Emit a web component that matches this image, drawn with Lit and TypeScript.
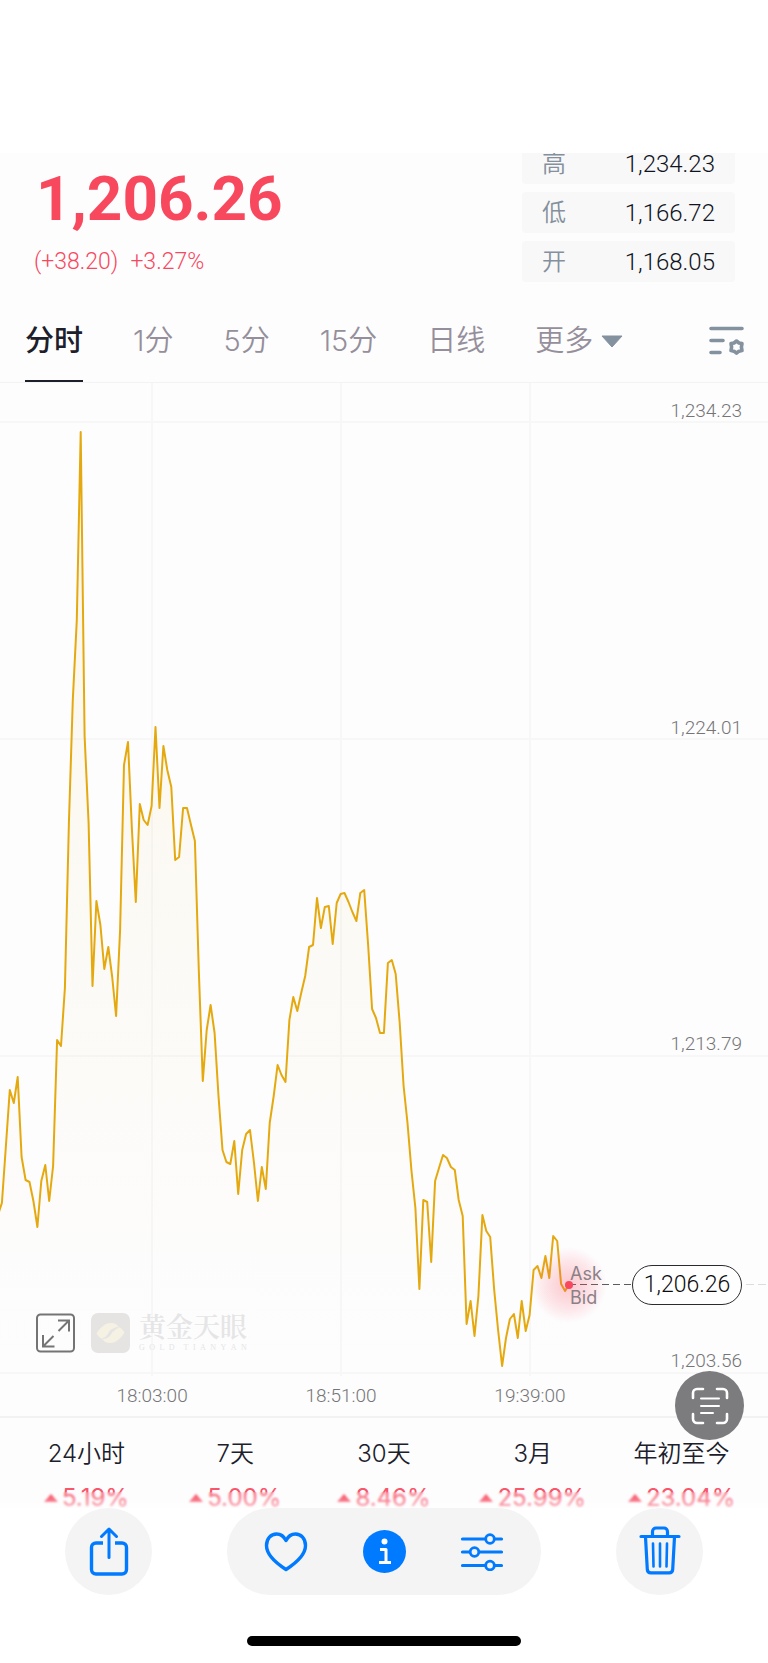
import { LitElement, html, css, svg } from "lit";
import { customElement } from "lit/decorators.js";

const PLOT_W = 768;
const PLOT_H = 993;
const FIRST_X = -2;
const LAST_X = 569;

// One sample per minute, measured down from the top edge of the plot.
const SAMPLES = [
  832, 820, 763, 707, 720, 694, 774, 797, 799, 818, 844, 798, 782, 818, 783, 657, 663, 605, 440, 317,
  237, 49, 353, 440, 603, 518, 542, 586, 564, 594, 633, 547, 382, 359, 446, 519, 421, 437, 442, 423,
  344, 425, 363, 387, 404, 477, 474, 425, 425, 442, 458, 587, 698, 647, 622, 650, 713, 767, 779, 781,
  758, 811, 767, 751, 747, 780, 818, 784, 806, 740, 713, 682, 692, 699, 637, 614, 628, 610, 593, 564,
  562, 515, 545, 524, 523, 561, 520, 511, 510, 519, 529, 538, 510, 507, 563, 626, 635, 650, 650, 580,
  577, 591, 640, 703, 740, 788, 825, 906, 817, 819, 879, 798, 785, 772, 775, 784, 787, 817, 833, 941,
  918, 953, 913, 832, 848, 854, 907, 947, 983, 955, 936, 931, 955, 918, 948, 932, 887, 883, 895, 873,
  895, 853, 858, 901, 908, 901,
];

const LINE = SAMPLES.map((y, i) => {
  const x = FIRST_X + ((LAST_X - FIRST_X) * i) / (SAMPLES.length - 1);
  return `${x.toFixed(1)},${y}`;
}).join(" ");

@customElement("quote-header")
class QuoteHeader extends LitElement {
  static styles = css`
    :host {
      display: flex;
      justify-content: space-between;
      overflow: hidden;
      padding: 0 33px 0 34px;
      height: 153px;
      font-family: Roboto, "Noto Sans CJK SC", sans-serif;
    }
    .price {
      margin: 10px 0 0 2px;
      font-size: 62px;
      line-height: 72px;
      font-weight: 700;
      color: #f8485e;
    }
    .change {
      display: flex;
      gap: 12px;
      margin-top: 13px;
      font-size: 23px;
      line-height: 28px;
      font-weight: 300;
      color: #f8485e;
    }
    .range {
      display: flex;
      flex-direction: column;
      gap: 8px;
      margin: -10px 0 0;
      width: 213px;
    }
    .row {
      display: flex;
      justify-content: space-between;
      align-items: center;
      flex: none;
      box-sizing: border-box;
      height: 41px;
      padding: 0 20px;
      border-radius: 4px;
      background: #f8f8f9;
    }
    dt {
      font-size: 24px;
      font-weight: 350;
      line-height: 32px;
      color: #84909c;
    }
    dd {
      margin: 0;
      font-size: 24px;
      font-weight: 300;
      line-height: 32px;
      color: #10141e;
    }
  `;
  render() {
    const rows = [["高", "1,234.23"], ["低", "1,166.72"], ["开", "1,168.05"]];
    return html`
      <div>
        <div class="price">1,206.26</div>
        <div class="change"><span>(+38.20)</span><span>+3.27%</span></div>
      </div>
      <dl class="range">
        ${rows.map(([k, v]) => html`<div class="row"><dt>${k}</dt><dd>${v}</dd></div>`)}
      </dl>
    `;
  }
}

@customElement("period-tabs")
class PeriodTabs extends LitElement {
  static styles = css`
    :host {
      display: flex;
      justify-content: space-between;
      align-items: stretch;
      height: 76px;
      padding: 0 23px 0 25px;
      border-bottom: 1px solid #f3f3f5;
      font-family: Inter, "Noto Sans CJK SC", sans-serif;
    }
    .tabs {
      display: flex;
      gap: 50px;
    }
    button {
      display: flex;
      align-items: center;
      border: 0;
      border-bottom: 2px solid transparent;
      margin: 0;
      padding: 0 0 4px;
      background: none;
      font: inherit;
      font-size: 28px;
      font-weight: 350;
      line-height: 40px;
      color: #958f9b;
      white-space: nowrap;
    }
    .tabs button {
      font-size: 29px;
    }
    .tabs .active {
      font-weight: 500;
      color: #1b202b;
      border-color: #1b202b;
    }
    .caret {
      margin-left: 8px;
    }
  `;
  render() {
    return html`
      <nav class="tabs" aria-label="周期">
        ${["分时", "1分", "5分", "15分", "日线"].map(
          (t, i) => html`<button class=${i === 0 ? "active" : ""}>${t}</button>`
        )}
        <button aria-haspopup="menu">
          更多
          <svg class="caret" width="22" height="13" viewBox="0 0 22 13" aria-hidden="true">
            <path d="M1 1h20L11 12z" fill="#84919e" stroke="#84919e" stroke-linejoin="round" />
          </svg>
        </button>
      </nav>
      <button aria-label="图表设置">
        <svg width="36" height="30" viewBox="0 0 36 30" fill="none" stroke="#84919e" stroke-linecap="round">
          <path d="M2 2.500h31M2 14.500h12M2 26.500h9" stroke-width="3.600" />
          <path d="M27.500 15 30 17 33 17.600 32.400 21 33 24.600 30 25.200 27.500 27.200 25 25.200 22 24.600 22.600 21 22 17.600 25 17z" stroke-width="3.600" stroke-linejoin="round" />
        </svg>
      </button>
    `;
  }
}

@customElement("price-chart")
class PriceChart extends LitElement {
  static styles = css`
    :host {
      display: block;
      border-bottom: 2px solid #f2f2f3;
      font-family: Roboto, "Noto Sans CJK SC", sans-serif;
      color: #757577;
    }
    .plot {
      display: grid;
      position: relative;
      height: 993px;
    }
    .plot > * {
      grid-area: 1 / 1;
    }
    .series {
      width: 100%;
      height: 100%;
    }
    .series * {
      vector-effect: non-scaling-stroke;
    }
    .levels {
      display: flex;
      flex-direction: column;
      justify-content: space-between;
      align-items: flex-end;
      padding: 16px 26px 3px 0;
      font-size: 19px;
      font-weight: 300;
      line-height: 24px;
    }
    .brand {
      display: flex;
      align-self: end;
      align-items: center;
      gap: 16px;
      padding: 0 36px 23px;
    }
    .expand {
      display: block;
      border: 0;
      padding: 0;
      height: 40px;
      background: none;
    }
    .mark {
      display: flex;
      align-items: center;
      gap: 9px;
      color: #e5e5e6;
      font-family: "Liberation Serif", "Noto Serif CJK SC", "Noto Sans CJK SC", serif;
    }
    .cn {
      font-size: 27px;
      line-height: 30px;
      font-weight: 600;
    }
    .en {
      display: flex;
      justify-content: space-between;
      font-size: 8px;
      line-height: 10px;
    }
    .en span {
      display: block;
    }
    .last {
      position: absolute;
      left: 74.1%;
      right: 0;
      top: 90.8%;
      display: flex;
      align-items: center;
      height: 40px;
      margin-top: -20px;
    }
    .glow {
      position: absolute;
      left: -38px;
      top: -18px;
      width: 76px;
      height: 76px;
      border-radius: 50%;
      background: radial-gradient(closest-side, #f8485e47 0%, #f8485e38 30%, #f8485e1f 65%, #f8485e00 100%);
    }
    .dot {
      position: absolute;
      left: -4px;
      top: 16px;
      width: 8px;
      height: 8px;
      border-radius: 50%;
      background: #f8485e;
    }
    .sides {
      position: absolute;
      left: 1px;
      top: -3px;
      display: grid;
      font: 18px / 24px Inter, sans-serif;
      color: #8b8086;
    }
    .dash {
      flex: 1;
      height: 1px;
      background: repeating-linear-gradient(90deg, #5c5c5e 0 7px, transparent 7px 11px);
    }
    .tail {
      flex: none;
      width: 22px;
      margin-left: 4px;
      height: 1px;
      background: repeating-linear-gradient(90deg, #dcdcdd 0 8px, transparent 8px 12px);
    }
    .pill {
      box-sizing: border-box;
      width: 110px;
      height: 40px;
      border: 1px solid #2c2c2e;
      border-radius: 20px;
      background: #fff;
      text-align: center;
      font-size: 23px;
      font-weight: 300;
      line-height: 38px;
      color: #0c0c0e;
    }
    .times {
      display: flex;
      padding-left: 7.5%;
      font-size: 19px;
      font-weight: 300;
      line-height: 40px;
    }
    .times span {
      width: 26.6%;
      text-align: center;
    }
  `;
  render() {
    return html`
      <div class="plot">
        <svg class="series" viewBox="0 0 ${PLOT_W} ${PLOT_H}" preserveAspectRatio="none" role="img" aria-label="分时走势">
          <defs>
            <linearGradient id="fill" x1="0" y1="0" x2="0" y2="1">
              <stop offset="0" stop-color="#e5ab16" stop-opacity="0.080" />
              <stop offset="1" stop-color="#e5ab16" stop-opacity="0" />
            </linearGradient>
          </defs>
          ${[39, 356, 673, 990].map((y) => svg`<path d="M0 ${y}H768" stroke="#f7f7f8" stroke-width="2" />`)}
          ${[152, 341, 530].map((x) => svg`<path d="M${x} 0V993" stroke="#f7f7f8" stroke-width="2" />`)}
          <polygon points="-2,990 ${LINE} 569,990" fill="url(#fill)" />
          <polyline points=${LINE} fill="none" stroke="#e5a910" stroke-width="2" stroke-linejoin="round" />
        </svg>
        <div class="levels">
          <span>1,234.23</span><span>1,224.01</span><span>1,213.79</span><span>1,203.56</span>
        </div>
        <div class="brand">
          <button class="expand" aria-label="全屏">
            <svg width="39" height="40" viewBox="0 0 39 40" fill="none" stroke="#747475" stroke-width="2">
              <rect x="1" y="1.500" width="37" height="37" rx="3.500" />
              <path d="M22 7.500h11v11M32.500 8 22.500 18M7 22v11.500h11.500M7.500 33 17.500 23" />
            </svg>
          </button>
          <div class="mark">
            <svg width="39" height="40" viewBox="0 0 39 40" aria-hidden="true">
              <rect width="39" height="40" rx="7" fill="#e6e4e3" />
              <path d="M5.500 20.500C9 15 14 10 20 10c3.500 0 6 1.500 7.500 4-4 0-6.500 1.500-8.500 4.500-1.800 2.700-2.500 5-4.500 6.500-2.500 1.800-6 .5-9-4.500z" fill="#f5f2e4" />
              <path d="M33.500 19.500C30 25 25 30 19 30c-3.500 0-6-1.500-7.500-4 4 0 6.500-1.500 8.500-4.500 1.800-2.700 2.500-5 4.500-6.500 2.500-1.800 6-.5 9 4.500z" fill="#f5f2e4" />
              <path d="M21.500 16.500c-2.500 1.500-4 4-4.500 7M27 14.300c-2.500.7-4 2.200-5 4.200M12 25.700c2.500-.7 4-2.200 5-4.200" stroke="#e6e4e3" stroke-width="1.400" fill="none" />
            </svg>
            <div>
              <div class="cn">黄金天眼</div>
              <div class="en">${[..."GOLD TIANYAN"].map((c) => html`<span>${c}</span>`)}</div>
            </div>
          </div>
        </div>
        <div class="last">
          <span class="glow"></span>
          <span class="sides"><span>Ask</span><span>Bid</span></span>
          <span class="dash"></span>
          <span class="dot"></span>
          <span class="pill">1,206.26</span>
          <span class="tail"></span>
        </div>
      </div>
      <div class="times"><span>18:03:00</span><span>18:51:00</span><span>19:39:00</span></div>
    `;
  }
}

@customElement("period-stats")
class PeriodStats extends LitElement {
  static styles = css`
    :host {
      display: grid;
      position: relative;
      grid-template-columns: repeat(5, 1fr);
      padding: 16px 12px 0;
      font-family: Inter, "Noto Sans CJK SC", sans-serif;
      text-align: center;
      white-space: nowrap;
    }
    .name {
      font-size: 24px;
      line-height: 40px;
      font-weight: 350;
      color: #1b202b;
    }
    .value {
      display: flex;
      justify-content: center;
      align-items: center;
      gap: 4px;
      margin-top: 14px;
      font-size: 24px;
      line-height: 20px;
      font-weight: 400;
      color: #f8566b;
    }
    .soft {
      position: absolute;
      left: 0;
      right: 0;
      bottom: 0;
      height: 16px;
      backdrop-filter: blur(1px);
      background: linear-gradient(#ffffff00, #ffffff80);
    }
  `;
  render() {
    const stats = [["24小时", "5.19%"], ["7天", "5.00%"], ["30天", "8.46%"], ["3月", "25.99%"], ["年初至今", "23.04%"]];
    return html`
      ${stats.map(
        ([n, v]) => html`<div>
          <div class="name">${n}</div>
          <div class="value">
            <svg width="14" height="8" viewBox="0 0 14 8" aria-hidden="true"><path d="M7 0 14 8H0z" fill="#f8485e" /></svg>
            <span>${v}</span>
          </div>
        </div>`
      )}
      <div class="soft"></div>
    `;
  }
}

@customElement("photo-toolbar")
class PhotoToolbar extends LitElement {
  static styles = css`
    :host {
      display: flex;
      justify-content: space-between;
      padding: 0 65px;
    }
    .group {
      display: flex;
      padding: 0 10px;
      border-radius: 43px;
      background: #f4f4f5;
    }
    button {
      display: grid;
      place-items: center;
      width: 98px;
      height: 87px;
      border: 0;
      padding: 0;
      background: none;
    }
    .round {
      width: 87px;
      border-radius: 50%;
      background: #f4f4f5;
    }
    svg {
      fill: none;
      stroke: #007aff;
      stroke-width: 3.4;
      stroke-linecap: round;
      stroke-linejoin: round;
    }
    .solid {
      fill: #007aff;
      stroke: none;
    }
    .white {
      stroke: #fff;
      stroke-linecap: butt;
    }
    .dot {
      fill: #fff;
      stroke: none;
    }
    .knob {
      fill: #f4f4f5;
      stroke-width: 2.8;
    }
    .thin {
      stroke-width: 2.6;
    }
  `;
  render() {
    return html`
      <button class="round" aria-label="分享">
        <svg width="40" height="50" viewBox="0 0 40 50">
          <path d="M14 16H7a4.500 4.500 0 0 0-4.500 4.500v22A4.500 4.500 0 0 0 7 47h26a4.500 4.500 0 0 0 4.500-4.500v-22A4.500 4.500 0 0 0 33 16h-7" stroke-linecap="butt" />
          <path d="M20 30.500V2.500M12.500 9.500 20 2l7.500 7.500" stroke-width="3" />
        </svg>
      </button>
      <div class="group">
        <button aria-label="收藏">
          <svg width="44" height="40" viewBox="0 0 44 40">
            <path d="M22 37.500C15 33 2.500 24.500 2.500 13.500 2.500 6.500 7 2 12.500 2 17 2 20 4.500 22 8.500 24 4.500 27 2 31.500 2 37 2 41.500 6.500 41.500 13.500 41.500 24.500 29 33 22 37.500Z" />
          </svg>
        </button>
        <button aria-label="信息">
          <svg width="43" height="43" viewBox="0 0 43 43">
            <circle class="solid" cx="21.500" cy="21.500" r="21.500" />
            <circle class="dot" cx="21.500" cy="11.500" r="3" />
            <path class="white" d="M17 19.500h6v13M16 32.500h12" stroke-width="3" />
          </svg>
        </button>
        <button aria-label="调整">
          <svg width="44" height="38" viewBox="0 0 44 38">
            <path d="M2.500 6h39M2.500 19h39M2.500 32.500h39" stroke-width="3.200" />
            <circle class="knob" cx="30" cy="6" r="4.300" />
            <circle class="knob" cx="14.500" cy="19" r="4.300" />
            <circle class="knob" cx="30" cy="32.500" r="4.300" />
          </svg>
        </button>
      </div>
      <button class="round" aria-label="删除">
        <svg width="42" height="54" viewBox="0 0 42 54">
          <path d="M2 11.500h38M6.500 12l1.800 32.500a3.600 3.600 0 0 0 3.600 3.300h18.200a3.600 3.600 0 0 0 3.600-3.300l1.800-32.500" stroke-width="3.200" />
          <path d="M13.500 11V6.500a3.500 3.500 0 0 1 3.500-3.500h8a3.500 3.500 0 0 1 3.500 3.500V11" stroke-width="3.200" />
          <path class="thin" d="M14 18.500l.5 23M21 18.500v23M28 18.500l-.5 23" />
        </svg>
      </button>
    `;
  }
}

@customElement("app-root")
class AppRoot extends LitElement {
  static styles = css`
    :host {
      display: block;
      background: #fff;
    }
    .page {
      display: flow-root;
    }
    .shot {
      position: relative;
      margin-top: 153px;
      background: #fdfdfe;
    }
    .scan {
      position: absolute;
      right: 24px;
      bottom: 68px;
      display: grid;
      place-items: center;
      width: 69px;
      height: 69px;
      border: 0;
      border-radius: 50%;
      padding: 0;
      background: #7c7c7e;
    }
    .home {
      width: 274px;
      height: 10px;
      margin: 41px auto 17px;
      border-radius: 5px;
      background: #000;
    }
  `;
  render() {
    return html`
      <main class="page">
        <div class="shot">
          <quote-header></quote-header>
          <period-tabs></period-tabs>
          <price-chart></price-chart>
          <period-stats></period-stats>
          <button class="scan" aria-label="识别文本">
            <svg width="38" height="38" viewBox="0 0 38 38" fill="none" stroke="#fff" stroke-width="2.600" stroke-linecap="round">
              <path d="M2 11V6a4 4 0 0 1 4-4h6M26 2h6a4 4 0 0 1 4 4v5M36 27v5a4 4 0 0 1-4 4h-6M12 36H6a4 4 0 0 1-4-4v-5" />
              <path d="M10 11.500h18M10 19h18M10 26h12" stroke-width="2" />
            </svg>
          </button>
        </div>
        <photo-toolbar></photo-toolbar>
        <div class="home"></div>
      </main>
    `;
  }
}
